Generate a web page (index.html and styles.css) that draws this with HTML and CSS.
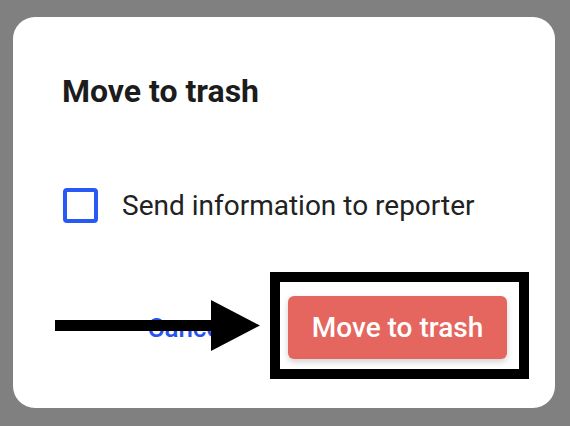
FILE: index.html
```html
<!DOCTYPE html>
<html>
<head>
<meta charset="utf-8">
<link rel="stylesheet" href="styles.css">
</head>
<body>
<div class="dialog">
  <h1 class="title">Move to trash</h1>
  <label class="option">
    <span class="checkbox"></span>
    <span class="option-text">Send information to reporter</span>
  </label>
  <div class="actions">
    <button class="btn-text">Cancel</button>
    <button class="btn-danger">Move to trash</button>
  </div>
  <div class="highlight"></div>
  <svg class="arrow" width="210" height="52" viewBox="0 0 210 52">
    <rect x="0" y="20" width="160" height="11" fill="#000"/>
    <polygon points="156,0 205,25.5 156,51" fill="#000"/>
  </svg>
</div>
</body>
</html>
```
FILE: styles.css
```css
html, body {
  margin: 0;
  padding: 0;
}
body {
  background: #808080;
  width: 570px;
  height: 426px;
  overflow: hidden;
  font-family: Roboto, "Liberation Sans", sans-serif;
}
.dialog {
  position: relative;
  box-sizing: border-box;
  margin: 17px 0 0 13px;
  width: 542px;
  height: 391px;
  background: #fff;
  border-radius: 22px;
  padding: 0 48px 0 49px;
  display: flex;
  flex-direction: column;
}
.title {
  margin: 54px 0 0 0;
  font-size: 32px;
  line-height: 40px;
  font-weight: 700;
  color: #1c1c1c;
}
.option {
  margin-top: 77px;
  display: flex;
  align-items: center;
  gap: 24px;
}
.checkbox {
  flex: none;
  width: 35px;
  height: 35px;
  box-sizing: border-box;
  border: 4px solid #2859f5;
  border-radius: 4px;
  margin-left: 1px;
}
.option-text {
  font-size: 28px;
  line-height: 33px;
  color: #222;
}
.actions {
  margin-top: 73px;
  display: flex;
  justify-content: flex-end;
  align-items: center;
  gap: 45px;
}
.btn-text {
  border: none;
  background: none;
  color: #2653f2;
  font-family: inherit;
  font-size: 26px;
  font-weight: 500;
  padding: 0 16px;
}
.btn-danger {
  border: none;
  background: #e4665e;
  color: #fff;
  font-family: inherit;
  font-size: 28px;
  font-weight: 500;
  width: 219px;
  height: 63px;
  border-radius: 6px;
  box-shadow: 0 3px 6px rgba(0,0,0,0.18);
}
.highlight {
  position: absolute;
  left: 257px;
  top: 255px;
  width: 239px;
  height: 87px;
  border: 10px solid #000;
}
.arrow {
  position: absolute;
  left: 42px;
  top: 283px;
}
```
